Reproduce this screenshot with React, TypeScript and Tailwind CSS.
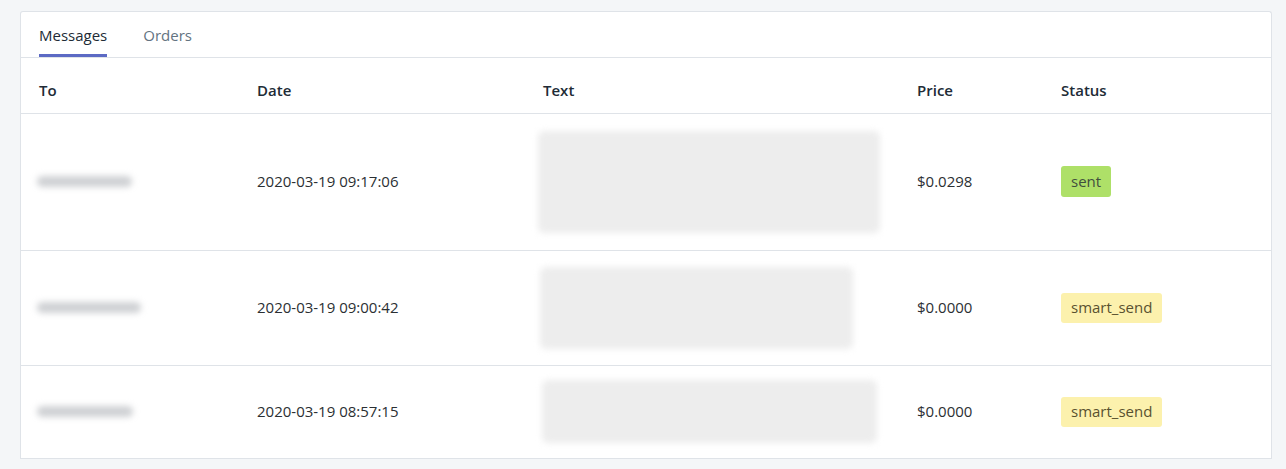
import React from 'react'

type Row = {
  toWidth: number
  date: string
  textBlock: { w: number; h: number; offset: number }
  price: string
  status: 'sent' | 'smart_send'
  height: number
}

const rows: Row[] = [
  { toWidth: 95, date: '2020-03-19 09:17:06', textBlock: { w: 342, h: 102, offset: -5 }, price: '$0.0298', status: 'sent', height: 137 },
  { toWidth: 104, date: '2020-03-19 09:00:42', textBlock: { w: 313, h: 82, offset: -3 }, price: '$0.0000', status: 'smart_send', height: 115 },
  { toWidth: 96, date: '2020-03-19 08:57:15', textBlock: { w: 335, h: 63, offset: -1 }, price: '$0.0000', status: 'smart_send', height: 93 },
]

function StatusBadge({ status }: { status: Row['status'] }) {
  if (status === 'sent') {
    return (
      <span className="inline-flex h-[31px] items-center rounded-[3px] bg-[#aee068] px-[10px] text-[#414f3e]">
        sent
      </span>
    )
  }
  return (
    <span className="inline-flex h-[30px] items-center rounded-[3px] bg-[#fcf1ad] px-[10px] text-[#595130]">
      smart_send
    </span>
  )
}

export default function App() {
  return (
    <div
      className="min-h-[469px] bg-[#f4f6f8] px-[20px] pt-[11px] text-[15px] text-[#212b36]"
      style={{ fontFamily: '"Open Sans", "Noto Sans", sans-serif' }}
    >
      <div className="w-[1252px] overflow-hidden rounded-t-[3px] border border-b-0 border-[#dfe3e8] bg-white">
        <div className="flex h-[46px] gap-[36px] border-b border-[#dfe3e8] px-[18px]">
          <button className="relative flex items-center pt-[2px] text-[#212b36]">
            Messages
            <span className="absolute inset-x-0 bottom-0 h-[3px] bg-[#5c6ac4]" />
          </button>
          <button className="flex items-center pt-[2px] text-[#637381]">Orders</button>
        </div>
        <table className="w-full table-fixed border-collapse">
          <thead>
            <tr className="h-[55px] border-b border-[#dfe3e8] text-left">
              <th className="w-[236px] pb-[11px] pl-[18px] align-bottom font-semibold">To</th>
              <th className="w-[286px] pb-[11px] align-bottom font-semibold">Date</th>
              <th className="w-[374px] pb-[11px] align-bottom font-semibold">Text</th>
              <th className="w-[144px] pb-[11px] align-bottom font-semibold">Price</th>
              <th className="pb-[11px] align-bottom font-semibold">Status</th>
            </tr>
          </thead>
          <tbody>
            {rows.map((row, i) => (
              <tr key={i} className="border-b border-[#dfe3e8]" style={{ height: row.height }}>
                <td className="pl-[16px] align-middle">
                  <div
                    className="h-[11px] rounded-full bg-[#cfd1d4] blur-[3px]"
                    style={{ width: row.toWidth }}
                  />
                </td>
                <td className="align-middle text-[#2b2f33]">{row.date}</td>
                <td className="align-middle">
                  <div
                    className="rounded-[6px] bg-[#ededed] blur-[3px]"
                    style={{ width: row.textBlock.w, height: row.textBlock.h, marginLeft: row.textBlock.offset }}
                  />
                </td>
                <td className="align-middle text-[#2b2f33]">{row.price}</td>
                <td className="align-middle">
                  <StatusBadge status={row.status} />
                </td>
              </tr>
            ))}
          </tbody>
        </table>
      </div>
    </div>
  )
}
